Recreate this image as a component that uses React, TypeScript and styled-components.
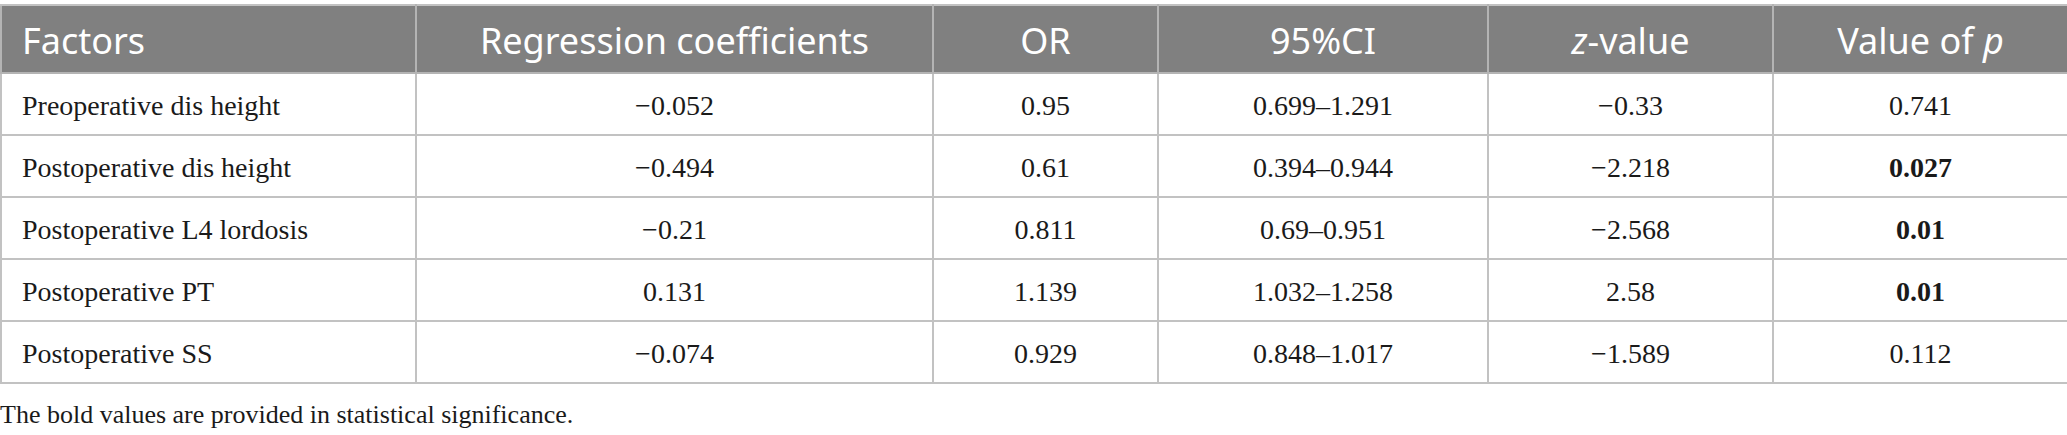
import React from "react";
import styled, { createGlobalStyle } from "styled-components";

const Global = createGlobalStyle`
  html, body { margin: 0; padding: 0; background: #ffffff; }
  body { padding-top: 4px; }
`;

const Table = styled.table`
  width: 2067px;
  border-collapse: collapse;
  table-layout: fixed;
  border: 2px solid #c2c2c2;
`;

const HeadRow = styled.tr`
  height: 68px;
  background: #808080;
`;

const BodyRow = styled.tr`
  height: 62px;
`;

const HeadCell = styled.th<{ $left?: boolean }>`
  border: 2px solid #b4b4b4;
  border-top-color: #c2c2c2;
  padding: 3px 0 0 ${(p) => (p.$left ? "20px" : "0")};
  text-align: ${(p) => (p.$left ? "left" : "center")};
  color: #ffffff;
  font-family: "Noto Sans", "Open Sans", sans-serif;
  font-weight: 400;
  font-size: 36px;
  line-height: 1;
  vertical-align: middle;
  i { font-style: italic; }
`;

const Cell = styled.td<{ $left?: boolean; $bold?: boolean }>`
  border: 2px solid #c2c2c2;
  padding: 3px 0 0 ${(p) => (p.$left ? "20px" : "0")};
  text-align: ${(p) => (p.$left ? "left" : "center")};
  color: #1a1a1a;
  font-family: "Liberation Serif", "Times New Roman", serif;
  font-weight: ${(p) => (p.$bold ? 700 : 400)};
  font-size: 28px;
  line-height: 1;
  vertical-align: middle;
`;

const Footnote = styled.p`
  margin: 16px 0 0 0;
  font-family: "Liberation Serif", "Times New Roman", serif;
  font-size: 26px;
  line-height: 1.15;
  color: #1a1a1a;
`;

const widths = [415, 517, 225, 330, 285, 295];

type Row = { factor: string; vals: string[]; bold?: boolean };

const rows: Row[] = [
  { factor: "Preoperative dis height", vals: ["−0.052", "0.95", "0.699–1.291", "−0.33", "0.741"] },
  { factor: "Postoperative dis height", vals: ["−0.494", "0.61", "0.394–0.944", "−2.218", "0.027"], bold: true },
  { factor: "Postoperative L4 lordosis", vals: ["−0.21", "0.811", "0.69–0.951", "−2.568", "0.01"], bold: true },
  { factor: "Postoperative PT", vals: ["0.131", "1.139", "1.032–1.258", "2.58", "0.01"], bold: true },
  { factor: "Postoperative SS", vals: ["−0.074", "0.929", "0.848–1.017", "−1.589", "0.112"] },
];

export default function App() {
  return (
    <>
      <Global />
      <Table>
        <colgroup>
          {widths.map((w, i) => (
            <col key={i} style={{ width: w }} />
          ))}
        </colgroup>
        <thead>
          <HeadRow>
            <HeadCell $left>Factors</HeadCell>
            <HeadCell>Regression coefficients</HeadCell>
            <HeadCell>OR</HeadCell>
            <HeadCell>95%CI</HeadCell>
            <HeadCell>
              <i>z</i>-value
            </HeadCell>
            <HeadCell>
              Value of <i>p</i>
            </HeadCell>
          </HeadRow>
        </thead>
        <tbody>
          {rows.map((r) => (
            <BodyRow key={r.factor}>
              <Cell $left>{r.factor}</Cell>
              {r.vals.map((v, i) => (
                <Cell key={i} $bold={r.bold && i === 4}>
                  {v}
                </Cell>
              ))}
            </BodyRow>
          ))}
        </tbody>
      </Table>
      <Footnote>The bold values are provided in statistical significance.</Footnote>
    </>
  );
}
